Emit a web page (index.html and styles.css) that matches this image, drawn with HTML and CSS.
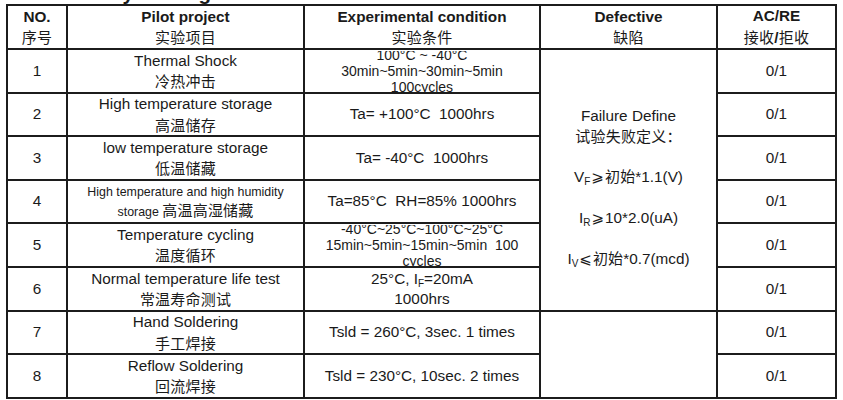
FILE: index.html
```html
<!DOCTYPE html>
<html lang="zh">
<head>
<meta charset="utf-8">
<title>Reliability Testing</title>
<link rel="stylesheet" href="styles.css">
</head>
<body>
<div class="page">
  <div class="title-clip"><div class="title">Reliability Testing</div></div>
  <table class="rt">
    <colgroup>
      <col class="c-no"><col class="c-item"><col class="c-cond"><col class="c-def"><col class="c-ac">
    </colgroup>
    <tr class="r-head">
      <td><div class="en b">NO.</div><div class="cn">序号</div></td>
      <td><div class="en b">Pilot project</div><div class="cn">实验项目</div></td>
      <td><div class="en b">Experimental condition</div><div class="cn">实验条件</div></td>
      <td><div class="en b">Defective</div><div class="cn">缺陷</div></td>
      <td><div class="en b">AC/RE</div><div class="cn">接收<span class="en b">/</span>拒收</div></td>
    </tr>
    <tr class="r44">
      <td class="en">1</td>
      <td><div class="en">Thermal Shock</div><div class="cn">冷热冲击</div></td>
      <td><div class="tight"><div>100°C ~ -40°C</div><div>30min~5min~30min~5min</div><div>100cycles</div></div></td>
      <td rowspan="6" class="def">
        <div class="dl en">Failure Define</div>
        <div class="dl cn">试验失败定义：</div>
        <div class="dl">&nbsp;</div>
        <div class="dl en">V<sub>F</sub><span class="sym">⩾</span><span class="cn">初始</span>*1.1(V)</div>
        <div class="dl">&nbsp;</div>
        <div class="dl en">I<sub>R</sub><span class="sym">⩾</span>10*2.0(uA)</div>
        <div class="dl">&nbsp;</div>
        <div class="dl en">I<sub>V</sub><span class="sym">⩽</span><span class="cn">初始</span>*0.7(mcd)</div>
      </td>
      <td class="en">0/1</td>
    </tr>
    <tr class="r43">
      <td class="en">2</td>
      <td><div class="en">High temperature storage</div><div class="cn">高温储存</div></td>
      <td class="en">Ta= +100°C&nbsp; 1000hrs</td>
      <td class="en">0/1</td>
    </tr>
    <tr class="r44">
      <td class="en">3</td>
      <td><div class="en">low temperature storage</div><div class="cn">低温储藏</div></td>
      <td class="en">Ta= -40°C&nbsp; 1000hrs</td>
      <td class="en">0/1</td>
    </tr>
    <tr class="r43">
      <td class="en">4</td>
      <td class="small-item"><div class="en sm">High temperature and high humidity</div><div><span class="en sm">storage </span><span class="cn">高温高湿储藏</span></div></td>
      <td class="en">Ta=85°C&nbsp; RH=85% 1000hrs</td>
      <td class="en">0/1</td>
    </tr>
    <tr class="r44">
      <td class="en">5</td>
      <td><div class="en">Temperature cycling</div><div class="cn">温度循环</div></td>
      <td><div class="tight"><div>-40°C~25°C~100°C~25°C</div><div>15min~5min~15min~5min&nbsp; 100</div><div>cycles</div></div></td>
      <td class="en">0/1</td>
    </tr>
    <tr class="r44">
      <td class="en">6</td>
      <td><div class="en">Normal temperature life test</div><div class="cn">常温寿命测试</div></td>
      <td><div class="en">25°C, I<sub>F</sub>=20mA</div><div class="en">1000hrs</div></td>
      <td class="en">0/1</td>
    </tr>
    <tr class="r43">
      <td class="en">7</td>
      <td><div class="en">Hand Soldering</div><div class="cn">手工焊接</div></td>
      <td class="en">Tsld = 260°C, 3sec. 1 times</td>
      <td rowspan="2"></td>
      <td class="en">0/1</td>
    </tr>
    <tr class="r44">
      <td class="en">8</td>
      <td><div class="en">Reflow Soldering</div><div class="cn">回流焊接</div></td>
      <td class="en">Tsld = 230°C, 10sec. 2 times</td>
      <td class="en">0/1</td>
    </tr>
  </table>
</div>
</body>
</html>
```

FILE: styles.css
```css
html, body {
  margin: 0;
  padding: 0;
  background: #ffffff;
}

body {
  font-family: "Liberation Sans", Arial, "Noto Sans CJK SC", sans-serif;
  color: #1a1a1a;
}

.page {
  padding-left: 6px;
  width: 843px;
  height: 400px;
  overflow: hidden;
}

.title-clip {
  height: 4px;
  overflow: hidden;
}

.title {
  font-family: "Liberation Sans", Arial, sans-serif;
  font-weight: bold;
  font-size: 20.5px;
  line-height: 20px;
  margin-top: -17px;
  padding-left: 31px;
}

.rt {
  border-collapse: collapse;
  table-layout: fixed;
  width: 829px;
  border: 2px solid #1c1c1c;
}

.c-no { width: 60px; }
.c-item { width: 237px; }
.c-cond { width: 236px; }
.c-def { width: 177px; }
.c-ac { width: 119px; }

.rt td {
  border: 2px solid #1c1c1c;
  padding: 0;
  text-align: center;
  vertical-align: middle;
  font-size: 15.3px;
  line-height: 20.5px;
  overflow: hidden;
}

.r-head { height: 43px; }
.r43 { height: 43px; }
.r44 { height: 44px; }

.en {
  font-family: "Liberation Sans", Arial, sans-serif;
  font-size: 15.3px;
}

.b { font-weight: bold; }

.cn {
  font-family: "Noto Sans CJK SC", "Noto Sans CJK JP", sans-serif;
  font-size: 15px;
  letter-spacing: 0.2px;
}

.sm {
  font-size: 12.4px;
}

.small-item {
  line-height: 18px !important;
}

.tight {
  height: 41px;
  overflow: hidden;
  display: flex;
  flex-direction: column;
  justify-content: center;
  font-family: "Liberation Sans", Arial, sans-serif;
  font-size: 14px;
  line-height: 16px;
}

.tight div {
  flex: none;
}

.rt td.def {
  vertical-align: top;
  padding-top: 56px;
}

.dl {
  height: 20.4px;
  line-height: 20.4px;
  white-space: nowrap;
}

.dl .cn {
  line-height: 1;
}

sub {
  font-size: 10px;
  line-height: 0;
  vertical-align: -3px;
}

.sym {
  font-family: "DejaVu Sans", "Noto Sans CJK SC", sans-serif;
  font-size: 15px;
  line-height: 1;
  margin: 0 1px;
}
```
